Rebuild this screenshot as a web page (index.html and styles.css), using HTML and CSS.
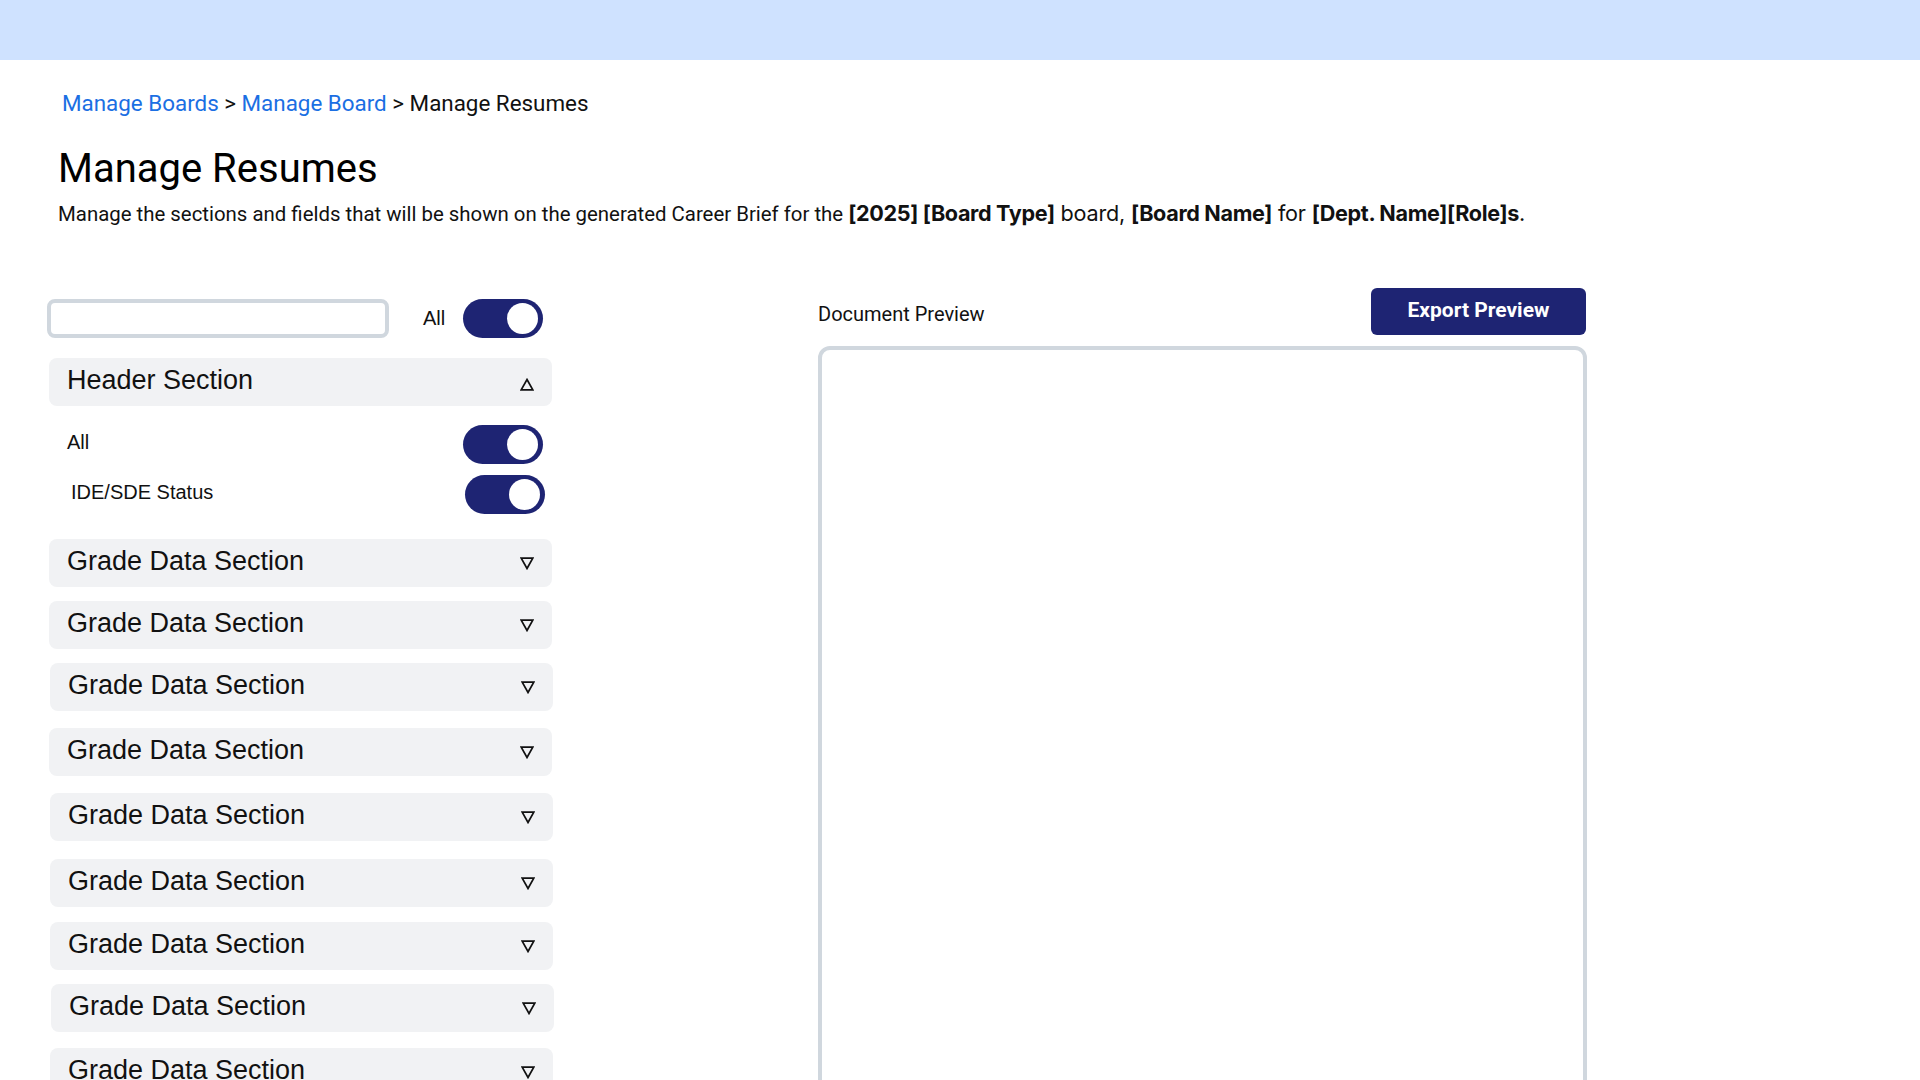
FILE: index.html
```html
<!DOCTYPE html>
<html lang="en">
<head>
<meta charset="utf-8">
<title>Manage Resumes</title>
<link rel="stylesheet" href="styles.css">
</head>
<body>
<div class="topbar"></div>
<main class="page">
  <nav class="breadcrumb">
    <a href="#" class="crumb-link">Manage Boards</a> &gt; <a href="#" class="crumb-link">Manage Board</a> &gt; <span>Manage Resumes</span>
  </nav>
  <h1 class="title">Manage Resumes</h1>
  <p class="desc">Manage the sections and fields that will be shown on the generated Career Brief for the <b class="strong">[2025] [Board Type]</b><span class="alt"> board, </span><b class="strong">[Board Name]</b><span class="alt"> for </span><b class="strong">[Dept. Name][Role]s</b><span class="alt">.</span></p>

  <div class="layout">
    <section class="left">
      <div class="toolbar">
        <input class="search" type="text">
        <span class="all-label">All</span>
        <span class="toggle"><span class="knob"></span></span>
      </div>

      <div class="section open">
        <div class="section-head">
          <span class="section-title">Header Section</span>
          <svg class="chev up" width="14" height="13" viewBox="0 0 14 13"><path d="M7 1.5 L12.8 11.8 H1.2 Z" fill="none" stroke="#111" stroke-width="1.7"/></svg>
        </div>
        <div class="section-body">
          <div class="field-row"><span class="field-label">All</span><span class="toggle"><span class="knob"></span></span></div>
          <div class="field-row"><span class="field-label indent">IDE/SDE Status</span><span class="toggle shift"><span class="knob"></span></span></div>
        </div>
      </div>

      <div class="section g0"><div class="section-head"><span class="section-title">Grade Data Section</span><svg class="chev" width="14" height="13" viewBox="0 0 14 13"><path d="M7 11.5 L12.8 1.2 H1.2 Z" fill="none" stroke="#111" stroke-width="1.7"/></svg></div></div>
      <div class="section g14"><div class="section-head"><span class="section-title">Grade Data Section</span><svg class="chev" width="14" height="13" viewBox="0 0 14 13"><path d="M7 11.5 L12.8 1.2 H1.2 Z" fill="none" stroke="#111" stroke-width="1.7"/></svg></div></div>
      <div class="section g14 nudge"><div class="section-head"><span class="section-title">Grade Data Section</span><svg class="chev" width="14" height="13" viewBox="0 0 14 13"><path d="M7 11.5 L12.8 1.2 H1.2 Z" fill="none" stroke="#111" stroke-width="1.7"/></svg></div></div>
      <div class="section g17"><div class="section-head"><span class="section-title">Grade Data Section</span><svg class="chev" width="14" height="13" viewBox="0 0 14 13"><path d="M7 11.5 L12.8 1.2 H1.2 Z" fill="none" stroke="#111" stroke-width="1.7"/></svg></div></div>
      <div class="section g17 nudge"><div class="section-head"><span class="section-title">Grade Data Section</span><svg class="chev" width="14" height="13" viewBox="0 0 14 13"><path d="M7 11.5 L12.8 1.2 H1.2 Z" fill="none" stroke="#111" stroke-width="1.7"/></svg></div></div>
      <div class="section g18 nudge"><div class="section-head"><span class="section-title">Grade Data Section</span><svg class="chev" width="14" height="13" viewBox="0 0 14 13"><path d="M7 11.5 L12.8 1.2 H1.2 Z" fill="none" stroke="#111" stroke-width="1.7"/></svg></div></div>
      <div class="section g15 nudge"><div class="section-head"><span class="section-title">Grade Data Section</span><svg class="chev" width="14" height="13" viewBox="0 0 14 13"><path d="M7 11.5 L12.8 1.2 H1.2 Z" fill="none" stroke="#111" stroke-width="1.7"/></svg></div></div>
      <div class="section g14 nudge2"><div class="section-head"><span class="section-title">Grade Data Section</span><svg class="chev" width="14" height="13" viewBox="0 0 14 13"><path d="M7 11.5 L12.8 1.2 H1.2 Z" fill="none" stroke="#111" stroke-width="1.7"/></svg></div></div>
      <div class="section g16 nudge"><div class="section-head"><span class="section-title">Grade Data Section</span><svg class="chev" width="14" height="13" viewBox="0 0 14 13"><path d="M7 11.5 L12.8 1.2 H1.2 Z" fill="none" stroke="#111" stroke-width="1.7"/></svg></div></div>
    </section>

    <section class="right">
      <div class="preview-head">
        <span class="preview-label">Document Preview</span>
        <button class="export-btn" type="button">Export Preview</button>
      </div>
      <div class="preview-box"></div>
    </section>
  </div>
</main>
</body>
</html>
```
FILE: styles.css
```css
* { box-sizing: border-box; }

html, body {
  margin: 0;
  padding: 0;
  background: #ffffff;
}

body {
  font-family: Roboto, "Liberation Sans", Arial, sans-serif;
  color: #000;
}

.topbar {
  height: 60px;
  background: #cfe2ff;
}

.page {
  padding: 30px 0 0 58px;
}

.breadcrumb {
  font-size: 22.4px;
  line-height: 26px;
  padding-left: 4px;
  color: #111;
}

.crumb-link {
  color: #1b6fe3;
  text-decoration: none;
}

.title {
  margin: 29px 0 0 0;
  font-size: 40px;
  line-height: 48px;
  font-weight: 400;
  color: #000;
}

.desc {
  margin: 6px 0 0 0;
  font-size: 20.4px;
  line-height: 28px;
  color: #111;
}

.strong {
  font-family: Inter, "Liberation Sans", sans-serif;
  font-weight: 700;
  font-size: 21.6px;
  letter-spacing: -0.35px;
}

.alt {
  font-family: Inter, "Liberation Sans", sans-serif;
  font-weight: 400;
  font-size: 21.6px;
  letter-spacing: -0.2px;
}

.layout {
  display: flex;
  align-items: flex-start;
  margin-top: 60px;
  margin-left: -11px;
}

.left {
  width: 506px;
  margin-top: 11px;
  display: flex;
  flex-direction: column;
}

.toolbar {
  display: flex;
  align-items: center;
  height: 39px;
}

.search {
  width: 342px;
  height: 39px;
  border: 4px solid #d0d7de;
  border-radius: 8px;
  background: #fff;
  outline: none;
  padding: 0 10px;
  font-family: inherit;
  font-size: 18px;
}

.all-label {
  font-family: "Liberation Sans", Arial, sans-serif;
  font-size: 20px;
  margin-left: 34px;
  color: #111;
}

.toggle {
  position: relative;
  display: inline-block;
  width: 80px;
  height: 39px;
  border-radius: 20px;
  background: #1e2473;
  margin-left: 18px;
  flex: none;
}

.toggle .knob {
  position: absolute;
  top: 4px;
  right: 5px;
  width: 31px;
  height: 31px;
  border-radius: 50%;
  background: #fff;
}

.section {
  margin-left: 2px;
  width: 503px;
}

.section.open { margin-top: 20px; }
.section.g0 { margin-top: 0; }
.section.g14 { margin-top: 14px; }
.section.g15 { margin-top: 15px; }
.section.g16 { margin-top: 16px; }
.section.g17 { margin-top: 17px; }
.section.g18 { margin-top: 18px; }

.section.nudge { margin-left: 3px; }
.section.nudge2 { margin-left: 4px; }

.section-head {
  height: 48px;
  background: #f1f2f4;
  border-radius: 8px;
  display: flex;
  align-items: center;
  justify-content: space-between;
  padding: 0 18px 0 18px;
}

.section-title {
  font-family: "Liberation Sans", Arial, sans-serif;
  font-size: 27px;
  color: #111;
  margin-top: -3px;
}

.chev {
  display: block;
  flex: none;
}

.chev.up {
  margin-top: 4px;
}

.section-body {
  padding: 19px 9px 0 18px;
  margin-bottom: 25px;
  display: flex;
  flex-direction: column;
  gap: 11px;
}

.field-row {
  display: flex;
  align-items: center;
  justify-content: space-between;
  height: 39px;
}

.field-label {
  font-family: "Liberation Sans", Arial, sans-serif;
  font-size: 20px;
  color: #111;
  margin-top: -4px;
}

.field-label.indent {
  margin-left: 4px;
}

.toggle.shift {
  margin-right: -2px;
}

.right {
  margin-left: 265px;
  width: 769px;
  display: flex;
  flex-direction: column;
}

.preview-head {
  display: flex;
  align-items: center;
  justify-content: space-between;
  height: 47px;
}

.preview-label {
  font-size: 20px;
  padding-top: 5px;
  color: #111;
}

.export-btn {
  width: 215px;
  height: 47px;
  border: none;
  border-radius: 6px;
  background: #1e2473;
  color: #fff;
  font-family: Roboto, "Liberation Sans", Arial, sans-serif;
  font-weight: 700;
  font-size: 21px;
  margin-right: 1px;
  padding: 0 0 4px 0;
}

.preview-box {
  margin-top: 11px;
  height: 760px;
  border: 4px solid #d0d7de;
  border-radius: 12px;
  background: #fff;
}
```
